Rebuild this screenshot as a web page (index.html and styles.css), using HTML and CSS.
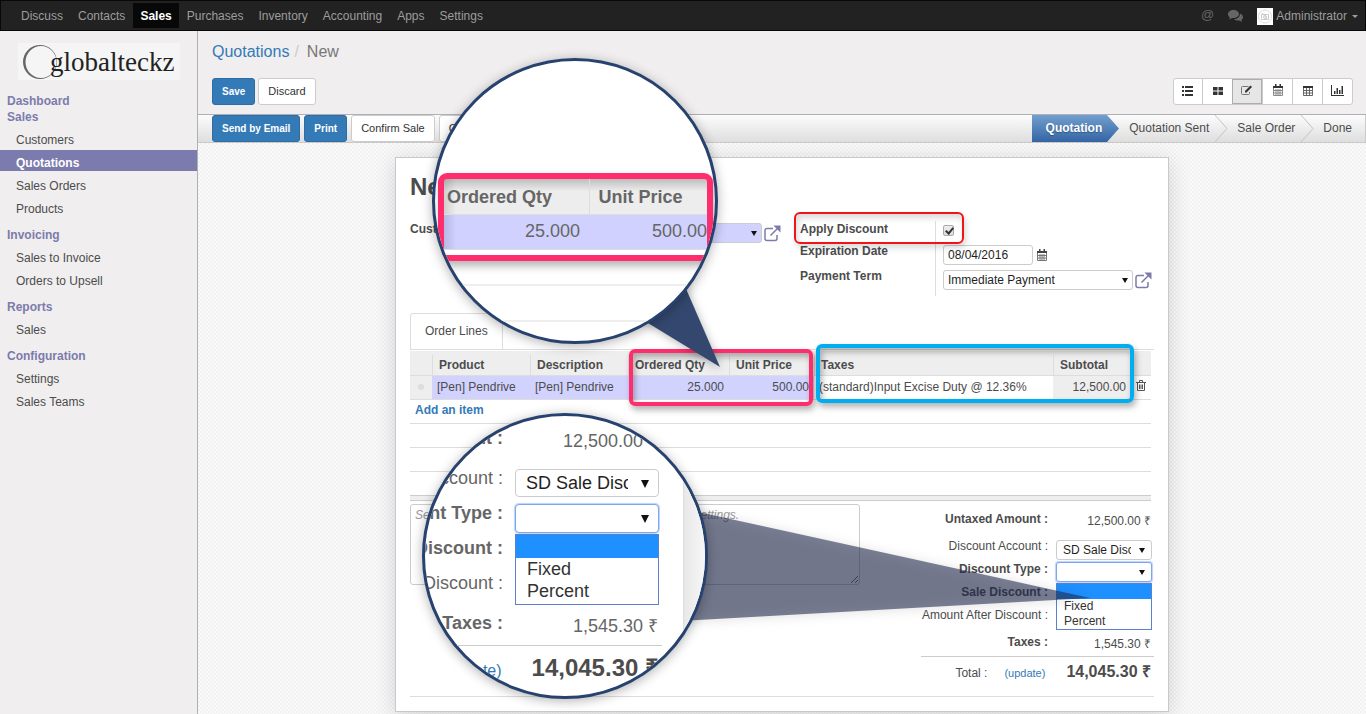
FILE: index.html
```html
<!DOCTYPE html>
<html lang="en">
<head>
    <meta charset="UTF-8">
    <meta name="viewport" content="width=device-width, initial-scale=1.0">
    <title>New - Quotations</title>
    <link rel="stylesheet" href="styles.css">
</head>
<body>
    <!-- Top menu -->
    <nav class="navbar">
        <a href="#">Discuss</a>
        <a href="#">Contacts</a>
        <a href="#" class="active">Sales</a>
        <a href="#">Purchases</a>
        <a href="#">Inventory</a>
        <a href="#">Accounting</a>
        <a href="#">Apps</a>
        <a href="#">Settings</a>
        <div class="systray">
            <a href="#" class="mention">@</a>
            <a href="#" class="chat" aria-label="Conversations">
                <svg width="15" height="13" viewBox="0 0 15 13"><path d="M5.5 0C2.5 0 0 1.800 0 4.200c0 1.300.8 2.500 2 3.300-.2.700-.6 1.200-1 1.700 1.300-.1 2.400-.6 3.200-1.200.4.100.9.100 1.300.1 3 0 5.500-1.700 5.500-4S8.500 0 5.500 0z"/><path d="M12 3.500c.1 3.200-2.600 5.500-6 5.700 1 .9 2.500 1.400 4 1.400.4 0 .8 0 1.100-.1.900.7 1.900 1.200 3.100 1.300-.4-.5-.7-1-.9-1.600 1-.8 1.700-1.800 1.700-3 0-1.600-1.200-2.900-3-3.700z"/></svg>
            </a>
            <a href="#" class="user">
                <svg width="16" height="17" viewBox="0 0 16 17"><path fill="#fff" d="M0 0h16v17H0z"/><circle cx="8" cy="8.500" r="6.500" fill="none" stroke="#ddd"/><path fill="none" stroke="#ccc" d="M4.500 6.500h7v5h-7zM5 5l6 7"/><circle cx="8" cy="9" r="1.500" fill="none" stroke="#ccc"/></svg>
                Administrator
                <span class="caret"></span>
            </a>
        </div>
    </nav>

    <div class="main">
        <!-- Left menu -->
        <aside class="sidebar">
            <div class="logo">
                <svg width="36" height="36" viewBox="0 0 36 36"><path fill="#666" fill-rule="evenodd" d="M18 1a17 17 0 1 0 0 34 17 17 0 1 0 0-34zm1 1a15.500 16 0 1 1 0 32 15.500 16 0 1 1 0-32z"/></svg>
                <span>globalteckz</span>
            </div>
            <h2>Dashboard</h2>
            <h2>Sales</h2>
            <ul>
                <li><a href="#">Customers</a></li>
                <li><a href="#" class="active">Quotations</a></li>
                <li><a href="#">Sales Orders</a></li>
                <li><a href="#">Products</a></li>
            </ul>
            <h2>Invoicing</h2>
            <ul>
                <li><a href="#">Sales to Invoice</a></li>
                <li><a href="#">Orders to Upsell</a></li>
            </ul>
            <h2>Reports</h2>
            <ul>
                <li><a href="#">Sales</a></li>
            </ul>
            <h2>Configuration</h2>
            <ul>
                <li><a href="#">Settings</a></li>
                <li><a href="#">Sales Teams</a></li>
            </ul>
        </aside>

        <div class="content">
            <!-- Control panel -->
            <header class="control-panel">
                <div class="breadcrumb"><a href="#">Quotations</a><i>/</i><span>New</span></div>
                <div class="panel-row">
                    <div class="buttons">
                        <button class="btn primary">Save</button>
                        <button class="btn">Discard</button>
                    </div>
                    <div class="switcher">
                        <button aria-label="List"><svg width="12" height="10" viewBox="0 0 12 10"><path d="M0 0h2v2H0zM0 4h2v2H0zM0 8h2v2H0zM3 0h8v2H3zM3 4h8v2H3zM3 8h8v2H3z"/></svg></button>
                        <button aria-label="Kanban"><svg width="12" height="10" viewBox="0 0 12 10"><path d="M1 1h4.500v3.500H1zM6.500 1H11v3.500H6.500zM1 5.500h4.500V9H1zM6.500 5.500H11V9H6.500z"/></svg></button>
                        <button aria-label="Form" class="active"><svg width="12" height="11" viewBox="0 0 12 11"><path fill="none" stroke="#777" d="M7.500 1.500h-6a1 1 0 0 0-1 1v6a1 1 0 0 0 1 1h6a1 1 0 0 0 1-1V7"/><path d="M4 7.500V6l5.500-5.500L11 2 5.500 7.500z"/></svg></button>
                        <button aria-label="Calendar"><svg width="12" height="12" viewBox="0 0 12 12"><path fill="none" stroke="#888" d="M1.500 3v8.500h9V3M1 6.500h10M1 9h10M4 5v6M6 5v6M8 5v6"/><path d="M1 2h10v2H1zM3 0h1.500v3H3zM7.500 0H9v3H7.500z"/></svg></button>
                        <button aria-label="Pivot"><svg width="12" height="10" viewBox="0 0 12 10"><path fill="none" stroke="#666" d="M1.500 1v8.500h9V1M1 4.500h10M1 7h10M4.500 2v7.500M7.500 2v7.500"/><path d="M1 0h10v2H1z"/></svg></button>
                        <button aria-label="Graph"><svg width="13" height="11" viewBox="0 0 13 11"><path d="M0 0h1v10h12v1H0zM3 6h1.500v3H3zM5.500 3H7v6H5.500zM8 5h1.500v4H8zM10.500 1H12v8h-1.500z"/></svg></button>
                    </div>
                </div>
            </header>

            <!-- Status bar -->
            <div class="statusbar">
                <div class="buttons">
                    <button class="btn primary">Send by Email</button>
                    <button class="btn primary">Print</button>
                    <button class="btn">Confirm Sale</button>
                    <button class="btn">Cancel</button>
                </div>
                <div class="steps">
                    <span class="step current">Quotation</span>
                    <svg width="13" height="27" viewBox="0 0 13 27"><defs><linearGradient id="step" x1="0" y1="0" x2="0" y2="1"><stop offset="0" stop-color="#729fcf"/><stop offset="1" stop-color="#3465a4"/></linearGradient></defs><path fill="url(#step)" d="M0 0l12 13.500L0 27z"/></svg>
                    <span class="step">Quotation Sent</span>
                    <svg width="13" height="27" viewBox="0 0 13 27"><path fill="none" stroke="#c4c4c4" d="M0 0l12 13.500L0 27"/></svg>
                    <span class="step">Sale Order</span>
                    <svg width="13" height="27" viewBox="0 0 13 27"><path fill="none" stroke="#c4c4c4" d="M0 0l12 13.500L0 27"/></svg>
                    <span class="step last">Done</span>
                </div>
            </div>

            <!-- Form -->
            <div class="form-bg">
                <main class="sheet">
                    <h1>New</h1>
                    <div class="groups">
                        <div class="group customer">
                            <label for="customer">Customer</label>
                            <span class="select"><select id="customer"><option></option></select></span>
                            <a href="#" class="open" aria-label="Open customer"><svg width="17" height="17" viewBox="0 0 17 17"><path d="M9 3.500H3a2 2 0 0 0-2 2v8a2 2 0 0 0 2 2h8a2 2 0 0 0 2-2V10M6.500 10.500L14 3"/><path class="head" d="M9.500 0.500h7v7l-2.400-2.300-2.300-2.300z"/></svg></a>
                        </div>
                        <div class="group">
                            <div class="field short">
                                <label for="apply-discount">Apply Discount</label>
                                <div class="value"><input type="checkbox" id="apply-discount" checked></div>
                            </div>
                            <div class="field">
                                <label for="expiration">Expiration Date</label>
                                <div class="value">
                                    <input type="text" id="expiration" class="date" value="08/04/2016">
                                    <svg width="12" height="12" viewBox="0 0 12 12"><path fill="none" stroke="#777" d="M1.500 3v8.500h9V3M1 6.500h10M1 9h10M4 5v6M6 5v6M8 5v6"/><path fill="#444" d="M1 2h10v2H1zM3 0h1.500v3H3zM7.500 0H9v3H7.500z"/></svg>
                                </div>
                            </div>
                            <div class="field tall">
                                <label for="payment-term">Payment Term</label>
                                <div class="value">
                                    <span class="select"><select id="payment-term"><option>Immediate Payment</option></select></span>
                                    <a href="#" class="open" aria-label="Open payment term"><svg width="17" height="17" viewBox="0 0 17 17"><path d="M9 3.500H3a2 2 0 0 0-2 2v8a2 2 0 0 0 2 2h8a2 2 0 0 0 2-2V10M6.500 10.500L14 3"/><path class="head" d="M9.500 0.500h7v7l-2.400-2.300-2.300-2.300z"/></svg></a>
                                </div>
                            </div>
                        </div>
                    </div>

                    <div class="tabs"><a href="#">Order Lines</a></div>

                    <table class="lines">
                        <thead>
                            <tr>
                                <th class="handle"></th>
                                <th class="product">Product</th>
                                <th class="product">Description</th>
                                <th class="qty">Ordered Qty</th>
                                <th class="price">Unit Price</th>
                                <th>Taxes</th>
                                <th class="subtotal">Subtotal</th>
                                <th class="remove"></th>
                            </tr>
                        </thead>
                        <tbody>
                            <tr>
                                <td class="handle"><i></i></td>
                                <td class="required">[Pen] Pendrive</td>
                                <td class="required">[Pen] Pendrive</td>
                                <td class="required number">25.000</td>
                                <td class="required number">500.00</td>
                                <td>(standard)Input Excise Duty @ 12.36%</td>
                                <td class="readonly number">12,500.00</td>
                                <td class="remove"><button aria-label="Delete line"><svg width="10" height="11" viewBox="0 0 10 11"><path fill="none" stroke="#555" d="M0 2.500h10M3.500 2V.5h3V2M1.500 3v7.500h7V3M3.500 4.500v4.500M5 4.500v4.500M6.500 4.500v4.500"/></svg></button></td>
                            </tr>
                        </tbody>
                    </table>
                    <div class="line"><a href="#">Add an item</a></div>
                    <div class="line"></div>
                    <div class="line"></div>
                    <div class="line end"></div>

                    <div class="footer">
                        <textarea aria-label="Terms and conditions" placeholder="Setup default terms and conditions in your company settings."></textarea>
                        <div class="totals">
                            <div class="total-row tall"><b>Untaxed Amount :</b><span class="amount">12,500.00 ₹</span></div>
                            <div class="total-row">
                                <label for="account">Discount Account :</label>
                                <span class="select"><select id="account"><option>SD Sale Discount</option></select></span>
                            </div>
                            <div class="total-row">
                                <label for="discount-type"><b>Discount Type :</b></label>
                                <span class="select open-list">
                                    <select id="discount-type"><option></option></select>
                                    <ul class="options"><li class="selected"></li><li>Fixed</li><li>Percent</li></ul>
                                </span>
                            </div>
                            <div class="total-row"><b>Sale Discount :</b></div>
                            <div class="total-row tall"><span>Amount After Discount :</span></div>
                            <div class="total-row"><b>Taxes :</b><span class="amount">1,545.30 ₹</span></div>
                            <div class="grand-total">
                                <span>Total :</span>
                                <a href="#">(update)</a>
                                <strong>14,045.30 ₹</strong>
                            </div>
                        </div>
                    </div>

                    <!-- Highlights -->
                    <div class="mark mark-discount"></div>
                    <div class="mark mark-price"></div>
                    <div class="mark mark-taxes"></div>

                    <svg class="beams" width="772" height="553" viewBox="0 0 772 553">
                        <path class="solid" d="M324 209L229 151l55-34z"/>
                        <path class="clear" d="M694 440L284 350v113z"/>
                    </svg>

                    <!-- Magnified order line -->
                    <div class="lens lens-price">
                        <div class="zoom-frame">
                            <table>
                                <thead><tr><th>Ordered Qty</th><th>Unit Price</th></tr></thead>
                                <tbody><tr><td>25.000</td><td>500.00</td></tr></tbody>
                            </table>
                        </div>
                        <div class="rule first"></div>
                        <div class="rule"></div>
                    </div>

                    <!-- Magnified discount fields -->
                    <div class="lens lens-discount">
                        <div class="zoom-totals">
                            <div class="total-row tall"><b>Untaxed Amount :</b><span class="amount">12,500.00 ₹</span></div>
                            <div class="total-row">
                                <label for="zoom-account">Discount Account :</label>
                                <span class="select"><select id="zoom-account"><option>SD Sale Discount</option></select></span>
                            </div>
                            <div class="total-row">
                                <label for="zoom-type"><b>Discount Type :</b></label>
                                <span class="select open-list">
                                    <select id="zoom-type"><option></option></select>
                                    <ul class="options"><li class="selected"></li><li>Fixed</li><li>Percent</li></ul>
                                </span>
                            </div>
                            <div class="total-row"><b>Sale Discount :</b></div>
                            <div class="total-row tall"><span>Amount After Discount :</span></div>
                            <div class="total-row"><b>Taxes :</b><span class="amount">1,545.30 ₹</span></div>
                            <div class="grand-total">
                                <a href="#">(update)</a>
                                <strong>14,045.30 ₹</strong>
                            </div>
                        </div>
                        <div class="zoom-edge"></div>
                    </div>
                </main>
            </div>
        </div>
    </div>
</body>
</html>
```
FILE: styles.css
```css
* {
    box-sizing: border-box;
}
body {
    margin: 0;
    min-height: 100vh;
    display: flex;
    flex-direction: column;
    font-family: "Liberation Sans", Arial, sans-serif;
    font-size: 12px;
    line-height: 16px;
    color: #4c4c4c;
    background-color: #f0eeee;
}
a {
    color: #337ab7;
    text-decoration: none;
}
ul {
    list-style: none;
    margin: 0;
    padding: 0;
}
button, input, select, textarea {
    font-family: inherit;
    font-size: 12px;
}

/* Top menu */
.navbar {
    display: flex;
    align-items: center;
    gap: 1px;
    height: 31px;
    padding-left: 13px;
    background-color: #222;
    border: 1px solid #080808;
}
.navbar a {
    padding: 5px 7px 4px;
    color: #9d9d9d;
}
.navbar a.active {
    background-color: #080808;
    color: #fff;
    font-weight: bold;
}
.systray {
    display: flex;
    align-items: center;
    margin-left: auto;
}
.navbar .mention, .navbar .chat {
    color: #666;
    font-size: 13px;
}
.navbar .mention {
    padding-top: 3px;
}
.chat svg {
    display: block;
    fill: #666;
}
.navbar .user {
    display: flex;
    align-items: center;
    gap: 3px;
    padding: 1px 7px 0 7px;
}
.caret {
    margin-left: 2px;
    border: 3px solid transparent;
    border-top-color: #9d9d9d;
    border-bottom: 0;
}

/* Left menu */
.main {
    flex: 1;
    display: flex;
}
.sidebar {
    flex: none;
    width: 198px;
    padding-top: 12px;
    border-right: 1px solid #afafb6;
}
.logo {
    display: flex;
    align-items: center;
    height: 37px;
    margin: 0 17px 13px 18px;
    padding-left: 4px;
    background-color: #f5f5f5;
    color: #222;
    font-family: "Liberation Serif", serif;
    font-size: 27px;
}
.logo span {
    margin-left: -8px;
}
.sidebar h2 {
    margin: 0 0 0 7px;
    font-size: 12px;
    line-height: 16px;
    color: #7c7bad;
}
.sidebar ul {
    padding: 2px 0 10px;
}
.sidebar li a {
    display: block;
    margin-bottom: 2px;
    padding: 5px 16px 0;
    color: #4c4c4c;
}
.sidebar li:last-child a {
    margin-bottom: 0;
}
.sidebar li a.active {
    background-color: #7c7bad;
    color: #fff;
    font-weight: bold;
}

/* Control panel */
.content {
    flex: 1;
    min-width: 0;
    display: flex;
    flex-direction: column;
}
.control-panel {
    height: 84px;
    padding: 11px 13px 0 14px;
    border-bottom: 1px solid #afafb6;
}
.breadcrumb {
    font-size: 16px;
    line-height: 20px;
    color: #777;
}
.breadcrumb i {
    margin: 0 8px 0 5px;
    color: #ccc;
    font-style: normal;
}
.panel-row {
    display: flex;
    justify-content: space-between;
    margin-top: 16px;
}
.buttons {
    display: flex;
    gap: 3px;
}
.btn {
    height: 27px;
    padding: 0 9px 1px;
    border: 1px solid #ccc;
    border-radius: 3px;
    background-color: #fff;
    color: #333;
    font-size: 11px;
}
.btn.primary {
    background-color: #337ab7;
    border-color: #2e6da4;
    color: #fff;
    font-size: 10px;
    font-weight: bold;
}
.switcher {
    display: flex;
    border: 1px solid #ccc;
    border-radius: 3px;
    background-color: #fff;
}
.switcher button {
    width: 30px;
    height: 25px;
    padding: 0;
    border: 0;
    border-left: 1px solid #ccc;
    background: none;
}
.switcher button:first-child {
    width: 28px;
    border-left: 0;
}
.switcher button.active {
    border: 1px solid #adadad;
    background-color: #e6e6e6;
}
.switcher svg {
    fill: #333;
}

/* Status bar */
.statusbar {
    display: flex;
    justify-content: space-between;
    height: 28px;
    padding-left: 14px;
    border-bottom: 1px solid #cacaca;
    background: linear-gradient(#fcfcfc, #dedede);
}
.statusbar .buttons {
    gap: 4px;
}
.steps {
    display: flex;
    line-height: 26px;
}
.step {
    padding: 0 6px 0 9px;
}
.step.current {
    padding: 0 5px 0 14px;
    background: linear-gradient(#729fcf, #3465a4);
    color: #fff;
    font-weight: bold;
    text-shadow: 0 1px 1px rgba(0, 0, 0, 0.3);
}
.step.last {
    padding-right: 13px;
    border-right: 1px solid #cacaca;
}

/* Form */
.form-bg {
    flex: 1;
    padding: 14px 16px 2px;
    background: repeating-conic-gradient(#f1f1f1 0 25%, #fafafa 0 50%) 0 0 / 4px 4px;
}
.sheet {
    position: relative;
    max-width: 774px;
    margin: 0 auto;
    padding: 14px;
    border: 1px solid #c8c8d3;
    background-color: #fff;
    box-shadow: 0 4px 20px rgba(0, 0, 0, 0.15);
}
.sheet h1 {
    margin: 0 0 19px;
    font-size: 24px;
    line-height: 30px;
}
.groups {
    display: flex;
    margin-bottom: 17px;
}
.group {
    flex: 1;
}
.groups label {
    font-weight: bold;
}
.customer {
    flex: none;
    display: flex;
    align-items: flex-start;
    width: 371px;
    margin-right: 19px;
}
.customer label {
    flex: 1;
}
.customer .select {
    width: 220px;
    margin-top: 2px;
}
.customer .open {
    margin-top: 2px;
}
.field {
    display: flex;
    height: 25px;
}
.field.short {
    height: 22px;
}
.field.tall {
    height: 28px;
}
.field label {
    width: 136px;
    border-right: 1px solid #ddd;
}
.value {
    display: flex;
    align-items: flex-start;
    padding: 2px 0 0 7px;
}
.value > svg {
    margin: 4px 3px;
}
input[type="checkbox"] {
    appearance: none;
    width: 11px;
    height: 11px;
    margin: 2px 0;
    border: 1px solid #aaa;
    border-radius: 2px;
    background: linear-gradient(#eee, #ddd);
}
input[type="checkbox"]::after {
    content: "";
    display: block;
    width: 3px;
    height: 6px;
    margin-left: 3px;
    border: solid #333;
    border-width: 0 2px 2px 0;
    transform: rotate(40deg);
}
.date {
    width: 90px;
    height: 20px;
    padding: 0 4px;
    border: 1px solid #ccc;
    border-radius: 3px;
    color: #1f1f1f;
}
.select {
    position: relative;
    display: block;
    width: 190px;
}
.select select {
    appearance: none;
    display: block;
    width: 100%;
    height: 20px;
    padding: 0 18px 0 4px;
    border: 1px solid #ccc;
    border-radius: 3px;
    background-color: #fff;
    color: #1f1f1f;
}
.customer .select select {
    background-color: #d2d2ff;
}
.select::after {
    content: "";
    position: absolute;
    top: 8px;
    right: 5px;
    border: 3px solid transparent;
    border-top: 5px solid #111;
    border-bottom: 0;
}
.open svg {
    display: block;
    margin: 2px 0 0 2px;
    fill: none;
    stroke: #7c7bad;
    stroke-width: 1.5;
}
.open .head {
    fill: #7c7bad;
    stroke: none;
}

/* Order lines */
.tabs {
    display: flex;
    border-bottom: 1px solid #ddd;
}
.tabs a {
    height: 36px;
    padding: 0 14px;
    border: 1px solid #ddd;
    border-bottom: 0;
    border-radius: 3px 3px 0 0;
    color: #4c4c4c;
    line-height: 34px;
}
.lines {
    width: calc(100% - 3px);
    margin-top: 1px;
    border-collapse: separate;
    border-spacing: 0;
    table-layout: fixed;
}
.lines th, .lines td {
    height: 25px;
    padding: 4px 5px 0;
    border-bottom: 1px solid #ddd;
    text-align: left;
    white-space: nowrap;
}
.lines td {
    height: 24px;
    padding: 0 5px 2px;
}
.lines th {
    padding-left: 7px;
    background: linear-gradient(#ddd, #ddd) 0 4px / 1px 21px no-repeat #eee;
}
.lines th.handle, .lines th.remove {
    background: #eee;
}
.lines .handle {
    width: 22px;
    background-color: #eee;
}
.lines .handle i {
    display: block;
    width: 6px;
    height: 6px;
    margin: 0 3px;
    border-radius: 50%;
    background-color: #ddd;
}
.lines .product {
    width: 98px;
}
.lines .qty {
    width: 101px;
}
.lines .price {
    width: 85px;
}
.lines .subtotal {
    width: 78px;
}
.lines .remove {
    width: 20px;
}
.lines .required {
    background-color: #d2d2ff;
}
.lines .readonly {
    background-color: #eee;
}
.lines .number {
    text-align: right;
}
.lines button {
    display: block;
    padding: 0;
    border: 0;
    background: none;
}
.line {
    height: 24px;
    margin-right: 3px;
    padding: 2px 5px;
    border-bottom: 1px solid #ddd;
    font-weight: bold;
}
.line.end {
    height: 29px;
    margin-bottom: 3px;
    background: linear-gradient(#ccc, #ccc) 0 23px / 100% 1px no-repeat, linear-gradient(#eee, #eee) 0 24px / 100% 5px no-repeat;
    border-bottom-color: #ccc;
}

/* Totals */
.footer {
    display: flex;
    justify-content: space-between;
    align-items: flex-start;
    border-bottom: 1px solid #ddd;
}
.footer textarea {
    width: 450px;
    height: 81px;
    padding: 3px 4px;
    border: 1px solid #ccc;
    border-radius: 3px;
    background: none;
}
.footer textarea::placeholder {
    color: #999;
    font-style: italic;
}
.totals {
    width: 233px;
    padding-top: 7px;
}
.total-row {
    display: flex;
    justify-content: flex-end;
    height: 23px;
    margin-right: 106px;
    white-space: nowrap;
}
.total-row.tall {
    height: 27px;
}
.total-row .amount, .total-row .select {
    flex: none;
    width: 96px;
    margin: 2px -104px 0 8px;
    text-align: right;
}
.total-row .amount {
    padding-right: 1px;
}
.totals .select select {
    padding-left: 6px;
    padding-right: 20px;
}
.totals .select::after {
    right: 7px;
}
.select.open-list select {
    border-color: #7aa7f0;
    outline: 0;
    box-shadow: 0 0 1px 1px #bcd3fa;
}
.totals .open-list {
    margin-top: 1px;
}
.options {
    position: absolute;
    top: 21px;
    left: 0;
    right: 0;
    border: 1px solid #5b82c9;
    background-color: #fff;
    color: #333;
    text-align: left;
    line-height: 15px;
}
.options li {
    height: 15px;
    padding-left: 7px;
}
.options .selected {
    background-color: #1e90ff;
}
.grand-total {
    display: flex;
    align-items: baseline;
    justify-content: flex-end;
    height: 40px;
    margin-top: -1px;
    padding: 7px 3px 0 0;
    border-top: 1px solid #ccc;
}
.grand-total a {
    margin: 0 21px 0 17px;
    font-size: 11px;
}
.grand-total strong {
    font-size: 16px;
}

/* Highlights */
.mark {
    position: absolute;
    border: 4px solid #ff2d6b;
    border-radius: 6px;
    box-shadow: 2px 4px 6px rgba(0, 0, 0, 0.3), inset 2px 4px 6px rgba(0, 0, 0, 0.3);
    pointer-events: none;
}
.mark-discount {
    top: 54px;
    left: 398px;
    width: 170px;
    height: 32px;
    border: 2px solid #f01414;
    box-shadow: 2px 4px 6px rgba(0, 0, 0, 0.15), inset 2px 4px 6px rgba(0, 0, 0, 0.15);
}
.mark-price {
    top: 191px;
    left: 233px;
    width: 184px;
    height: 57px;
}
.mark-taxes {
    top: 186px;
    left: 420px;
    width: 318px;
    height: 59px;
    border-color: #00aeef;
}
.beams {
    position: absolute;
    top: 0;
    left: 0;
    pointer-events: none;
}
.beams .solid {
    fill: #34486f;
    filter: drop-shadow(0 1px 5px rgba(0, 0, 0, 0.3));
}
.beams .clear {
    fill: rgba(31, 40, 76, 0.58);
    filter: drop-shadow(0 1px 6px rgba(0, 0, 0, 0.2));
}

/* Magnifiers */
.lens {
    position: absolute;
    width: 286px;
    height: 286px;
    overflow: hidden;
    border: 3px solid #27426f;
    border-radius: 50%;
    background-color: #fff;
    color: #666;
    font-size: 18px;
    box-shadow: 0 2px 12px rgba(0, 0, 0, 0.3);
}
.lens-price {
    top: -100px;
    left: 36px;
    padding: 112px 0 0 3px;
}
.zoom-frame {
    width: 275px;
    height: 88px;
    overflow: hidden;
    border: 6px solid #ff2d6b;
    border-radius: 9px;
    box-shadow: 2px 5px 9px rgba(0, 0, 0, 0.3);
}
.zoom-frame table {
    width: 100%;
    border-collapse: collapse;
    background: linear-gradient(rgba(0, 0, 0, 0.2), transparent 12px), linear-gradient(90deg, rgba(0, 0, 0, 0.12), transparent 12px);
}
.zoom-frame th {
    width: 145px;
    height: 35px;
    padding: 2px 3px 0;
    border-bottom: 1px solid #ddd;
    background-color: rgba(0, 0, 0, 0.07);
    text-align: left;
    white-space: nowrap;
}
.zoom-frame th + th {
    width: auto;
    padding-left: 9px;
    border-left: 1px solid #ddd;
}
.zoom-frame td {
    height: 35px;
    padding: 0 9px 2px 0;
    border-bottom: 1px solid #ddd;
    background-color: rgba(0, 0, 255, 0.18);
    text-align: right;
}
.zoom-frame td + td {
    padding-right: 0;
}
.rule {
    height: 36px;
    border-bottom: 2px solid #eee;
}
.rule.first {
    height: 25px;
}
.lens-discount {
    top: 255px;
    left: 26px;
    display: flex;
}
.zoom-totals {
    flex: none;
    width: 237px;
    margin-right: 21px;
    padding-top: 10px;
    line-height: 24px;
}
.lens .total-row {
    height: 35px;
    margin-right: 159px;
}
.lens .total-row.tall {
    height: 40px;
}
.lens .total-row .amount, .lens .total-row .select {
    width: 144px;
    margin: 3px -156px 0 12px;
}
.lens .select select {
    height: 28px;
    padding: 0 30px 0 10px;
    border-radius: 4px;
    font-size: 18px;
}
.lens .select::after {
    top: 11px;
    right: 10px;
    border-width: 8px 4px 0;
}
.lens .open-list select {
    height: 29px;
}
.lens .options {
    top: 30px;
    padding-bottom: 2px;
    line-height: 22px;
}
.lens .options li {
    height: 22px;
    padding-left: 11px;
}
.lens .options .selected {
    height: 23px;
}
.lens .grand-total {
    height: 48px;
    padding-top: 10px;
}
.lens .grand-total a {
    margin: 0 30px 0 0;
    font-size: 16px;
}
.lens .grand-total strong {
    color: #4c4c4c;
    font-size: 24px;
}
.zoom-edge {
    flex: 1;
    border-left: 1px solid #ddd;
    background: linear-gradient(90deg, #e8e8e8, #f6f6f6 20px);
}
```
